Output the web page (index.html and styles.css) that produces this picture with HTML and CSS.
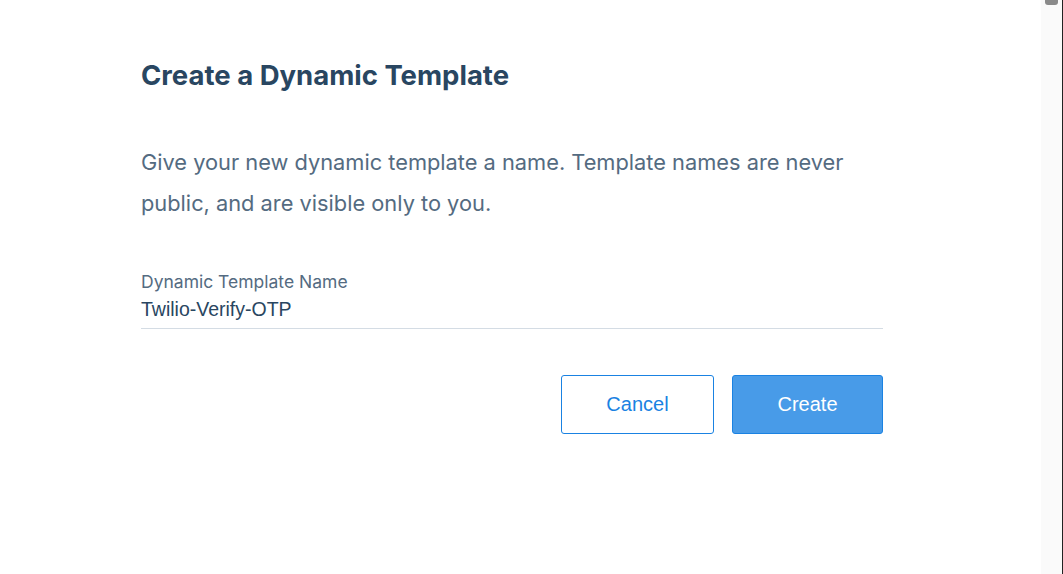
FILE: index.html
```html
<!DOCTYPE html>
<html>
<head>
<meta charset="utf-8">
<link rel="stylesheet" href="styles.css">
</head>
<body>
<div class="page">
  <main class="main">
    <div class="modal">
      <h1 class="title">Create a Dynamic Template</h1>
      <p class="desc">Give your new dynamic template a name. Template names are never public, and are visible only to you.</p>
      <div class="field">
        <label class="label">Dynamic Template Name</label>
        <div class="input">Twilio-Verify-OTP</div>
      </div>
      <div class="actions">
        <button class="btn btn-secondary">Cancel</button>
        <button class="btn btn-primary">Create</button>
      </div>
    </div>
  </main>
  <aside class="scrollbar"><div class="thumb"></div></aside>
</div>
</body>
</html>
```

FILE: styles.css
```css
html, body {
  margin: 0;
  padding: 0;
  height: 100%;
  background: #fff;
}
.page {
  display: flex;
  height: 574px;
}
.main {
  flex: 1;
  padding-left: 141px;
}
.modal {
  width: 742px;
  padding-top: 57px;
}
.title {
  margin: 0;
  font-family: Inter, "Noto Sans", sans-serif;
  font-weight: 700;
  font-size: 27.5px;
  line-height: 36px;
  color: #294661;
}
.desc {
  margin: 49px 0 0;
  font-family: Inter, "Noto Sans", sans-serif;
  font-size: 21.8px;
  line-height: 41px;
  color: #546b81;
  width: 720px;
}
.field {
  margin-top: 43px;
  border-bottom: 1px solid #d4dce4;
  padding-bottom: 6px;
}
.label {
  display: block;
  font-family: Inter, "Noto Sans", sans-serif;
  font-size: 17.5px;
  line-height: 29px;
  color: #546b81;
}
.input {
  font-family: "Liberation Sans", Arial, sans-serif;
  font-size: 19.5px;
  line-height: 26px;
  color: #294661;
}
.actions {
  display: flex;
  justify-content: flex-end;
  gap: 18px;
  margin-top: 46px;
}
.btn {
  height: 59px;
  border-radius: 3px;
  border: 1px solid #1a82e2;
  font-family: "Liberation Sans", Arial, sans-serif;
  font-size: 20px;
  padding: 0;
}
.btn-secondary {
  width: 153px;
  background: #fff;
  color: #1a82e2;
}
.btn-primary {
  width: 151px;
  background: #489be8;
  color: #fff;
}
.scrollbar {
  width: 22px;
  background: #fafafa;
  border-right: 1px solid #222;
  box-sizing: border-box;
}
.thumb {
  margin: 0 auto;
  width: 13px;
  height: 5px;
  background: #8a8a8a;
  border-radius: 0 0 3px 3px;
}
```
